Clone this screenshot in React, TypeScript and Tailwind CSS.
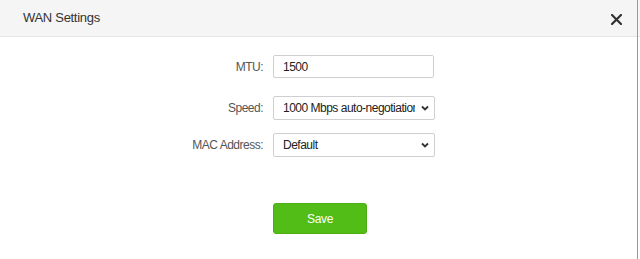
import React from "react";

export default function App() {
  const font = { fontFamily: '"Liberation Sans", Arial, sans-serif' };
  return (
    <div className="w-[640px] h-[259px] bg-white relative overflow-hidden" style={font}>
      <div className="h-[37px] bg-[#f5f5f5] border-b border-[#e6e6e6] flex items-center justify-between pl-[23px] pr-[18px]">
        <span className="text-[13px] tracking-[-0.3px] text-[#333] mt-[-1px]">WAN Settings</span>
        <svg width="11" height="11" viewBox="0 0 11 11" className="mt-[2px]">
          <path d="M1 1L10 10M10 1L1 10" stroke="#333" strokeWidth="2.2" strokeLinecap="square" />
        </svg>
      </div>
      <div className="absolute right-[2px] top-0 w-[1px] h-full bg-[#999]" />
      <div className="flex flex-col pt-[18px] text-[12px] tracking-[-0.5px]">
        <div className="flex items-center h-[23px]">
          <label className="w-[264px] pr-[1px] text-right text-[#555]">MTU:</label>
          <div className="ml-[9px] w-[161px] h-[23px] border border-[#cfcfcf] rounded-[2px] flex items-center pl-[9px] text-[#222]">1500</div>
        </div>
        <div className="flex items-center h-[24px] mt-[18px]">
          <label className="w-[264px] pr-[1px] text-right text-[#555]">Speed:</label>
          <div className="ml-[9px] w-[162px] h-[24px] border border-[#cfcfcf] rounded-[2px] flex items-center justify-between pl-[9px] pr-[5px] text-[#222] overflow-hidden">
            <span className="whitespace-nowrap overflow-hidden w-[132px]">1000 Mbps auto-negotiation</span>
            <svg width="8" height="6" viewBox="0 0 8 6"><path d="M1 1.5L4 4.5L7 1.5" stroke="#333" strokeWidth="1.8" fill="none" /></svg>
          </div>
        </div>
        <div className="flex items-center h-[24px] mt-[13px]">
          <label className="w-[264px] pr-[1px] text-right text-[#555]">MAC Address:</label>
          <div className="ml-[9px] w-[162px] h-[24px] border border-[#cfcfcf] rounded-[2px] flex items-center justify-between pl-[9px] pr-[5px] text-[#222]">
            <span>Default</span>
            <svg width="8" height="6" viewBox="0 0 8 6"><path d="M1 1.5L4 4.5L7 1.5" stroke="#333" strokeWidth="1.8" fill="none" /></svg>
          </div>
        </div>
        <div className="flex mt-[46px]">
          <button className="ml-[273px] w-[94px] h-[31px] bg-[#52bd16] border border-[#4aae12] rounded-[3px] text-white text-[12px] tracking-[-0.3px]">Save</button>
        </div>
      </div>
    </div>
  );
}
